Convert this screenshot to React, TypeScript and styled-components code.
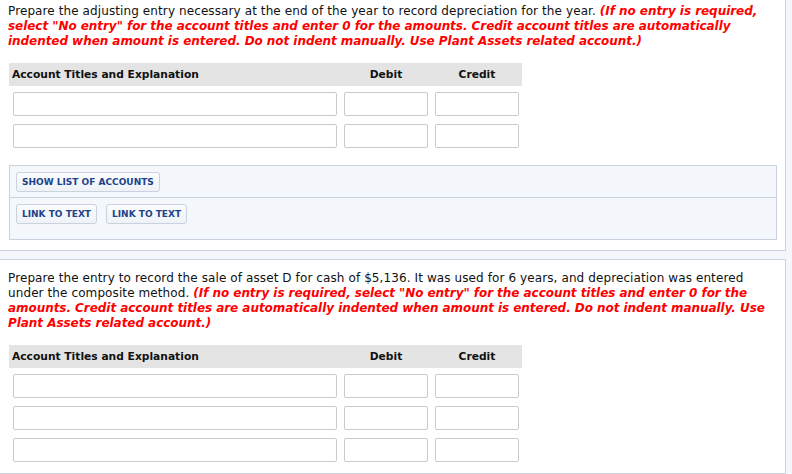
import React from "react";
import styled, { createGlobalStyle } from "styled-components";

const GlobalStyle = createGlobalStyle`
  body {
    margin: 0;
    background: #f3f6fa;
    font-family: "DejaVu Sans", Verdana, sans-serif;
    color: #111;
  }
`;

const Page = styled.div`
  display: flex;
  flex-direction: column;
  gap: 8px;
  width: 786px;
`;

const Panel = styled.div<{ $first?: boolean }>`
  background: #fff;
  border-right: 1px solid #c9d2de;
  border-bottom: 1px solid #c9d2de;
  border-top: ${(p) => (p.$first ? "none" : "1px solid #c9d2de")};
  padding: ${(p) => (p.$first ? "4px 8px 10px" : "11px 8px 11px")};
`;

const Question = styled.p`
  margin: 0 0 14px 0;
  width: 772px;
  font-size: 12px;
  letter-spacing: 0.1px;
  line-height: 15px;
`;

const Note = styled.span`
  color: #f00;
  font-weight: bold;
  font-style: italic;
  letter-spacing: -0.05px;
`;

const Table = styled.div`
  display: flex;
  flex-direction: column;
  gap: 8px;
  width: 513px;
  margin-left: 1px;
`;

const Row = styled.div<{ $head?: boolean }>`
  display: grid;
  grid-template-columns: 324px 84px 84px;
  column-gap: 7px;
  padding: 0 3px 0 4px;
  background: ${(p) => (p.$head ? "#e4e4e4" : "transparent")};
  height: ${(p) => (p.$head ? "23px" : "24px")};
  align-items: center;
  margin-bottom: ${(p) => (p.$head ? "-2px" : "0")};
`;

const HeadCell = styled.div<{ $center?: boolean }>`
  font-size: 10.7px;
  font-weight: bold;
  text-align: ${(p) => (p.$center ? "center" : "left")};
  margin-left: ${(p) => (p.$center ? "0" : "-1px")};
`;

const Field = styled.input`
  box-sizing: border-box;
  width: 100%;
  height: 24px;
  border: 1px solid #cbcbcb;
  border-radius: 2px;
  background: #fff;
  margin: 0;
  padding: 0 4px;
`;

const Tools = styled.div`
  margin: 17px 0 0 1px;
  width: 766px;
  background: #f4f7fb;
  border: 1px solid #c9d2de;
`;

const ToolRow = styled.div<{ $last?: boolean }>`
  display: flex;
  gap: 9px;
  padding: ${(p) => (p.$last ? "6px 6px 15px" : "6px 6px 5px")};
  border-bottom: ${(p) => (p.$last ? "none" : "1px solid #c9d2de")};
`;

const ToolButton = styled.button`
  font-family: "DejaVu Sans", Verdana, sans-serif;
  font-size: 9px;
  font-weight: bold;
  color: #21428a;
  height: 20px;
  padding: 0 5px;
  background: linear-gradient(#fbfcfd, #eef2f7);
  border: 1px solid #c9d2de;
  border-radius: 3px;
  cursor: pointer;
`;

const JournalTable = ({ rows }: { rows: number }) => (
  <Table>
    <Row $head>
      <HeadCell>Account Titles and Explanation</HeadCell>
      <HeadCell $center>Debit</HeadCell>
      <HeadCell $center>Credit</HeadCell>
    </Row>
    {Array.from({ length: rows }).map((_, i) => (
      <Row key={i}>
        <Field />
        <Field />
        <Field />
      </Row>
    ))}
  </Table>
);

const App = () => {
  return (
    <>
      <GlobalStyle />
      <Page>
        <Panel $first>
          <Question>
            Prepare the adjusting entry necessary at the end of the year to record depreciation for the
            year.{" "}
            <Note>
              (If no entry is required, select "No entry" for the account titles and enter 0 for the
              amounts. Credit account titles are automatically indented when amount is entered. Do not
              indent manually. Use Plant Assets related account.)
            </Note>
          </Question>
          <JournalTable rows={2} />
          <Tools>
            <ToolRow>
              <ToolButton>SHOW LIST OF ACCOUNTS</ToolButton>
            </ToolRow>
            <ToolRow $last>
              <ToolButton>LINK TO TEXT</ToolButton>
              <ToolButton>LINK TO TEXT</ToolButton>
            </ToolRow>
          </Tools>
        </Panel>
        <Panel>
          <Question>
            Prepare the entry to record the sale of asset D for cash of $5,136. It was used for 6 years,
            and depreciation was entered under the composite method.{" "}
            <Note>
              (If no entry is required, select "No entry" for the account titles and enter 0 for the
              amounts. Credit account titles are automatically indented when amount is entered. Do not
              indent manually. Use Plant Assets related account.)
            </Note>
          </Question>
          <JournalTable rows={3} />
        </Panel>
      </Page>
    </>
  );
};

export default App;
